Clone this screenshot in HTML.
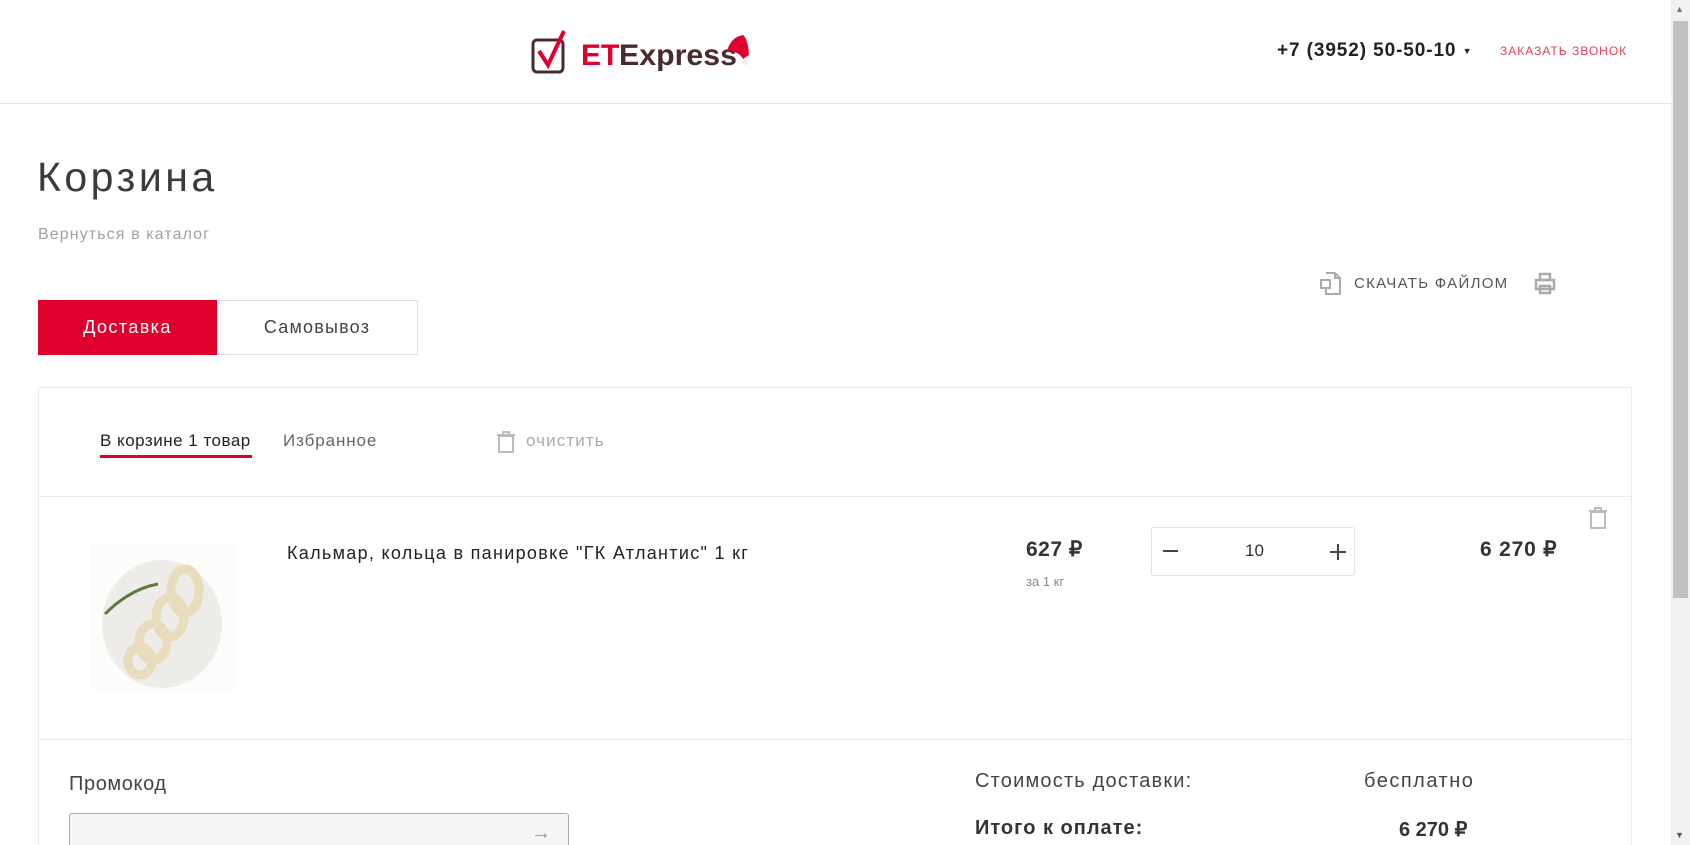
<!DOCTYPE html>
<html style="width:1690px;height:845px;overflow:hidden"><head><meta charset="utf-8"><style>
*{margin:0;padding:0;box-sizing:border-box}
body{width:1690px;height:845px;overflow:hidden;background:#fff;font-family:"Liberation Sans",sans-serif;color:#333;position:relative}
.a{position:absolute;white-space:nowrap}
</style></head><body>
<div class="a" style="left:0;top:0;width:1671px;height:104px;border-bottom:1px solid #e6e6e6"></div>
<!-- logo -->
<svg class="a" style="left:531px;top:29px" width="220" height="48" viewBox="0 0 220 48">
<rect x="2" y="11" width="30" height="32" rx="4" fill="none" stroke="#4a2a2e" stroke-width="3"/>
<path d="M8 22 L17 36 L33 2" fill="none" stroke="#e0002d" stroke-width="4"/>
<text x="50" y="36" font-family="Liberation Sans" font-weight="bold" font-size="30" fill="#e0002d">ET</text>
<text x="88" y="36" font-family="Liberation Sans" font-weight="bold" font-size="30" fill="#4a2a2e" textLength="118" lengthAdjust="spacingAndGlyphs">Express</text>
<path d="M196 22 Q200 8 212 6 Q217 10 218 26 L212 30 Q208 22 196 22Z" fill="#e0002d"/>
<circle cx="214" cy="33" r="3" fill="#eee"/>
</svg>
<div class="a" style="left:1277px;top:40px;font-size:19px;font-weight:bold;color:#222;letter-spacing:0.9px">+7 (3952) 50-50-10 <span style="font-size:9px;vertical-align:middle">▼</span></div>
<div class="a" style="left:1500px;top:44px;font-size:12px;color:#e0405a;letter-spacing:1px">ЗАКАЗАТЬ ЗВОНОК</div>
<!-- scrollbar -->
<div class="a" style="left:1671px;top:0;width:19px;height:845px;background:#f1f1f1"></div>
<div class="a" style="left:1673px;top:21px;width:15px;height:577px;background:#c1c1c1"></div>
<div class="a" style="left:1675px;top:4px;font-size:9px;color:#777">▲</div>
<div class="a" style="left:1675px;top:830px;font-size:9px;color:#555">▼</div>

<div class="a" style="left:37px;top:154px;font-size:41px;color:#3a3a3a;letter-spacing:3.5px">Корзина</div>
<div class="a" style="left:38px;top:226px;font-size:16px;color:#a0a0a0;letter-spacing:1.1px">Вернуться в каталог</div>

<div class="a" style="left:38px;top:300px;width:179px;height:55px;background:#e0002d;color:#fff;font-size:18px;text-align:center;line-height:55px;letter-spacing:1.4px">Доставка</div>
<div class="a" style="left:217px;top:300px;width:201px;height:55px;border:1px solid #ddd;border-left:none;color:#444;font-size:18px;text-align:center;line-height:53px;letter-spacing:1.2px">Самовывоз</div>

<svg class="a" style="left:1320px;top:272px" width="22" height="24" viewBox="0 0 22 24" fill="none" stroke="#aaa" stroke-width="2"><path d="M6 1h9l5 5v16H6v-6M15 1v5h5"/><rect x="1" y="8" width="9" height="8"/></svg>
<div class="a" style="left:1354px;top:275px;font-size:15px;color:#555;letter-spacing:1.3px">СКАЧАТЬ ФАЙЛОМ</div>
<svg class="a" style="left:1534px;top:272px" width="22" height="24" viewBox="0 0 22 24" fill="none" stroke="#aaa" stroke-width="2.5"><rect x="6" y="2" width="10" height="6"/><rect x="2" y="8" width="18" height="9"/><rect x="6" y="14" width="10" height="7"/></svg>

<!-- cart box -->
<div class="a" style="left:38px;top:387px;width:1594px;height:458px;border:1px solid #ebebeb;border-bottom:none"></div>
<div class="a" style="left:38px;top:496px;width:1594px;height:1px;background:#ebebeb"></div>
<div class="a" style="left:38px;top:739px;width:1594px;height:1px;background:#ebebeb"></div>
<div class="a" style="left:100px;top:431px;font-size:17px;color:#222;letter-spacing:0.5px">В корзине 1 товар</div>
<div class="a" style="left:100px;top:455px;width:152px;height:3px;background:#e0002d"></div>
<div class="a" style="left:283px;top:431px;font-size:17px;color:#666;letter-spacing:0.9px">Избранное</div>
<svg class="a" style="left:496px;top:430px" width="20" height="24" viewBox="0 0 20 24" fill="none" stroke="#bbb" stroke-width="2"><path d="M3 6h14v16H3z M1 5h18 M7 5V2h6v3"/></svg>
<div class="a" style="left:526px;top:431px;font-size:17px;color:#aaa;letter-spacing:1.1px">очистить</div>

<!-- image -->
<svg class="a" style="left:90px;top:544px" width="145" height="146" viewBox="0 0 145 146">
<rect width="145" height="146" fill="#fcfcfb"/>
<ellipse cx="72" cy="80" rx="60" ry="64" fill="#eeece8"/>
<g fill="none" stroke="#e8dcbc" stroke-width="9">
<ellipse cx="95" cy="47" rx="14" ry="22"/><ellipse cx="80" cy="73" rx="14" ry="20"/><ellipse cx="63" cy="98" rx="14" ry="18"/><ellipse cx="50" cy="117" rx="12" ry="14"/></g>
<path d="M15 70 Q40 45 68 40" stroke="#5b7a3a" stroke-width="3" fill="none"/>
</svg>
<div class="a" style="left:287px;top:543px;font-size:18px;color:#222;letter-spacing:1.3px">Кальмар, кольца в панировке "ГК Атлантис" 1 кг</div>
<div class="a" style="left:1026px;top:537px;font-size:21px;font-weight:bold;color:#333;letter-spacing:0.5px">627 ₽</div>
<div class="a" style="left:1026px;top:574px;font-size:13px;color:#888">за 1 кг</div>
<div class="a" style="left:1151px;top:527px;width:204px;height:49px;border:1px solid #e3e3e3;border-radius:3px"></div>
<div class="a" style="left:1163px;top:550px;width:15px;height:2px;background:#444"></div>
<div class="a" style="left:1245px;top:541px;font-size:17px;color:#333">10</div>
<div class="a" style="left:1330px;top:551px;width:16px;height:1.5px;background:#444"></div>
<div class="a" style="left:1337px;top:544px;width:1.5px;height:16px;background:#444"></div>
<div class="a" style="left:1480px;top:537px;font-size:21px;font-weight:bold;color:#333;letter-spacing:0.8px">6 270 ₽</div>
<svg class="a" style="left:1588px;top:506px" width="20" height="24" viewBox="0 0 20 24" fill="none" stroke="#bbb" stroke-width="2"><path d="M3 6h14v16H3z M1 5h18 M7 5V2h6v3"/></svg>

<div class="a" style="left:69px;top:773px;font-size:20px;color:#444;letter-spacing:0.6px">Промокод</div>
<div class="a" style="left:69px;top:813px;width:500px;height:40px;background:#f5f5f5;border:1px solid #aaa;border-radius:3px"></div>
<div class="a" style="left:531px;top:822px;font-size:20px;color:#999">→</div>
<div class="a" style="left:975px;top:770px;font-size:20px;color:#444;letter-spacing:1.2px">Стоимость доставки:</div>
<div class="a" style="left:1364px;top:770px;font-size:20px;color:#444;letter-spacing:1.5px">бесплатно</div>
<div class="a" style="left:975px;top:817px;font-size:20px;font-weight:bold;color:#333;letter-spacing:1px">Итого к оплате:</div>
<div class="a" style="left:1399px;top:817px;font-size:20px;font-weight:bold;color:#333">6 270 ₽</div>
</body></html>
